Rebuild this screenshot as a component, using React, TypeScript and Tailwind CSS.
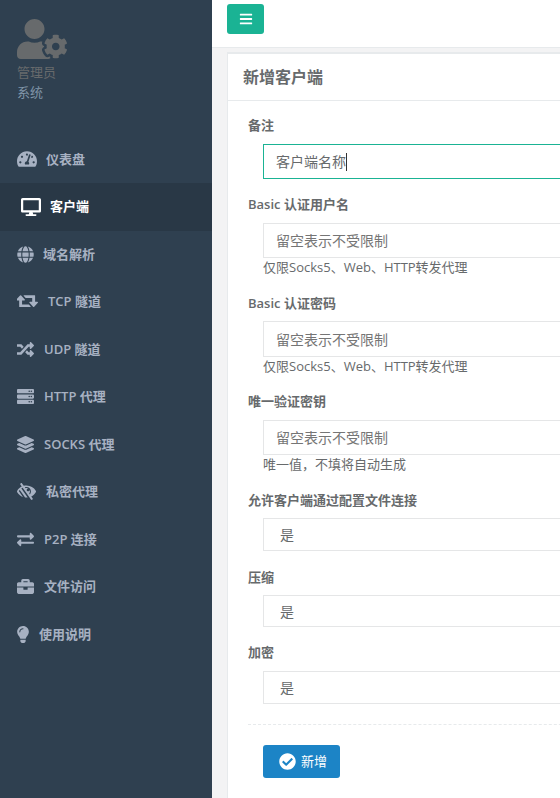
import React from "react";
import { FaTachometerAlt, FaDesktop, FaGlobe, FaRandom, FaServer, FaLayerGroup, FaLowVision, FaExchangeAlt, FaBriefcase, FaLightbulb, FaUserCog, FaCheckCircle, FaBars } from "react-icons/fa";

const font = "font-['Open_Sans','Noto_Sans_CJK_SC',sans-serif]";

function Retweet({ className }: { className?: string }) {
  return (
    <svg viewBox="0 256 1856 1280" fill="currentColor" preserveAspectRatio="none" className={className}>
      <path d="M1216 1504q0 13-9.5 22.5t-22.5 9.5h-960q-8 0-13.5-2t-9-7-5.5-8-3-11.5-1-11.5v-600h-192q-26 0-45-19t-19-45q0-24 15-41l320-384q19-22 49-22t49 22l320 384q15 17 15 41 0 26-19 45t-45 19h-192v384h576q16 0 25 11l160 192q7 10 7 21zm640-416q0 24-15 41l-320 384q-20 23-49 23t-49-23l-320-384q-15-17-15-41 0-26 19-45t45-19h192v-384h-576q-16 0-25-12l-160-192q-7-9-7-20 0-13 9.5-22.5t22.5-9.5h960q8 0 13.5 2t9 7 5.5 8 3 11.5 1 11.5v600h192q26 0 45 19t19 45z" />
    </svg>
  );
}

const nav = [
  { icon: FaTachometerAlt, cls: "w-[20px] h-[20px]", label: "仪表盘", gap: "gap-[9px]", pl: "pl-[17px]" },
  { icon: FaDesktop, cls: "w-[20px] h-[20px]", label: "客户端", gap: "gap-[9px]", pl: "pl-[21px]", active: true },
  { icon: FaGlobe, cls: "w-[17px] h-[17px]", label: "域名解析", gap: "gap-[9px]", pl: "pl-[17px]" },
  { icon: Retweet, cls: "w-[21px] h-[13px] mb-[3px]", label: "TCP 隧道", gap: "gap-[10px]", pl: "pl-[17px]" },
  { icon: FaRandom, cls: "w-[17px] h-[17px]", label: "UDP 隧道", gap: "gap-[10px]", pl: "pl-[17px]" },
  { icon: FaServer, cls: "w-[17px] h-[17px]", label: "HTTP 代理", gap: "gap-[10px]", pl: "pl-[17px]" },
  { icon: FaLayerGroup, cls: "w-[17px] h-[17px]", label: "SOCKS 代理", gap: "gap-[10px]", pl: "pl-[17px]" },
  { icon: FaLowVision, cls: "w-[19px] h-[19px]", label: "私密代理", gap: "gap-[10px]", pl: "pl-[17px]" },
  { icon: FaExchangeAlt, cls: "w-[17px] h-[17px]", label: "P2P 连接", gap: "gap-[10px]", pl: "pl-[17px]" },
  { icon: FaBriefcase, cls: "w-[17px] h-[17px]", label: "文件访问", gap: "gap-[10px]", pl: "pl-[17px]" },
  { icon: FaLightbulb, cls: "w-[12px] h-[17px]", label: "使用说明", gap: "gap-[10px]", pl: "pl-[17px]" },
];

function Field({ label, value, placeholder, help, focus, select, top, mt, h }: { label: string; value?: string; placeholder?: string; help?: string; focus?: boolean; select?: boolean; top: string; mt: string; h: string }) {
  return (
    <div className={`flex flex-col ${top}`}>
      <div className="pl-[20px] h-[20px] pt-[1px] leading-[20px] text-[13px] font-semibold text-[#676a6c]">{label}</div>
      <div className={`ml-[35px] ${mt} ${h} w-[400px] border flex items-center bg-white text-[14px] text-[#676a6c] ${focus ? "border-[#1ab394]" : "border-[#e5e6e7]"} ${select ? "pl-[16px]" : "pl-[12px]"}`}>
        {placeholder ? <span className="text-[#757575]">{placeholder}</span> : <span>{value}</span>}
        {focus && <span className="w-px h-[18px] bg-[#333]" />}
      </div>
      {help && <div className="ml-[35px] h-[19px] leading-[19px] text-[13px] text-[#676a6c]">{help}</div>}
    </div>
  );
}

export default function App() {
  return (
    <div className={`w-[560px] h-[798px] overflow-hidden flex bg-[#f3f3f4] ${font}`}>
      <aside className="w-[212px] shrink-0 bg-[#2f4050] flex flex-col">
        <div className="h-[135.5px] pl-[17px] pt-[19px] flex flex-col">
          <FaUserCog className="text-[#676a6c] w-[50px] h-[40px]" />
          <div className="mt-[3px] text-[13px] leading-[20px] text-[#676a6c]">管理员</div>
          <div className="text-[13px] leading-[20px] text-[#8095a8]">系统</div>
        </div>
        {nav.map((n) => (
          <div key={n.label} className={`h-[47.5px] flex items-center ${n.pl} ${n.gap} text-[13px] font-semibold ${n.active ? "bg-[#293846] text-white" : "text-[#a7b1c2]"}`}>
            <n.icon className={`shrink-0 ${n.cls}`} />
            <span>{n.label}</span>
          </div>
        ))}
      </aside>
      <main className="flex-1 min-w-0 flex flex-col">
        <div className="h-[48px] shrink-0 bg-white border-b border-[#e7eaec] pl-[15px] pt-[4px]">
          <div className="w-[37px] h-[30px] rounded-[3px] bg-[#1ab394] flex items-center justify-center text-white">
            <FaBars size={14} />
          </div>
        </div>
        <div className="flex-1 pl-[15px] pt-[4px]">
          <div className="h-full w-[400px] bg-white border-l-[1px] border-t-2 border-[#e7eaec]">
            <div className="h-[47px] flex items-center pl-[15px] text-[16px] font-semibold text-[#676a6c] border-b border-[#e7eaec]">新增客户端</div>
            <div className="flex flex-col">
              <Field top="mt-[13px]" mt="mt-[10px]" h="h-[35px]" label="备注" value="客户端名称" focus />
              <Field top="mt-[14px]" mt="mt-[10px]" h="h-[35px]" label="Basic 认证用户名" placeholder="留空表示不受限制" help="仅限Socks5、Web、HTTP转发代理" />
              <Field top="mt-[15px]" mt="mt-[9px]" h="h-[36px]" label="Basic 认证密码" placeholder="留空表示不受限制" help="仅限Socks5、Web、HTTP转发代理" />
              <Field top="mt-[14px]" mt="mt-[10px]" h="h-[35px]" label="唯一验证密钥" placeholder="留空表示不受限制" help="唯一值，不填将自动生成" />
              <Field top="mt-[15px]" mt="mt-[9px]" h="h-[33px]" label="允许客户端通过配置文件连接" value="是" select />
              <Field top="mt-[15px]" mt="mt-[9px]" h="h-[32px]" label="压缩" value="是" select />
              <Field top="mt-[14px]" mt="mt-[10px]" h="h-[33px]" label="加密" value="是" select />
              <div className="ml-[20px] mt-[20px] border-t border-dashed border-[#e7eaec]" />
              <div className="ml-[35px] mt-[20px] w-[77px] h-[33px] rounded-[3px] bg-[#1c84c6] text-white text-[13px] flex items-center pl-[16px] gap-[5px]">
                <FaCheckCircle size={17} />
                <span>新增</span>
              </div>
            </div>
          </div>
        </div>
      </main>
    </div>
  );
}
